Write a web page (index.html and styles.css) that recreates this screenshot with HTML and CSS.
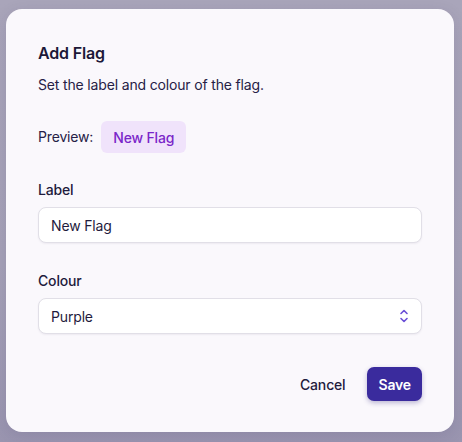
FILE: index.html
```html
<!DOCTYPE html>
<html lang="en">
<head>
<meta charset="utf-8">
<title>Add Flag</title>
<link rel="stylesheet" href="styles.css">
</head>
<body>
<div class="backdrop">
  <div class="dialog" role="dialog" aria-labelledby="dlg-title">
    <h2 class="title" id="dlg-title">Add Flag</h2>
    <p class="desc">Set the label and colour of the flag.</p>
    <div class="preview">
      <span class="preview-label">Preview:</span>
      <span class="badge">New Flag</span>
    </div>
    <div class="field">
      <label class="field-label" for="label">Label</label>
      <input class="input" id="label" type="text" value="New Flag">
    </div>
    <div class="field">
      <label class="field-label" for="colour">Colour</label>
      <div class="select">
        <span class="select-value">Purple</span>
        <svg class="chev" width="10" height="16" viewBox="0 0 10 16" aria-hidden="true">
          <path d="M2 5.5 L5 2.5 L8 5.5" fill="none" stroke="#6a4fd6" stroke-width="1.6" stroke-linecap="round" stroke-linejoin="round"/>
          <path d="M2 10.5 L5 13.5 L8 10.5" fill="none" stroke="#6a4fd6" stroke-width="1.6" stroke-linecap="round" stroke-linejoin="round"/>
        </svg>
      </div>
    </div>
    <div class="actions">
      <button class="btn btn-ghost" type="button">Cancel</button>
      <button class="btn btn-primary" type="button">Save</button>
    </div>
  </div>
</div>
</body>
</html>
```

FILE: styles.css
```css
* { box-sizing: border-box; }
html, body { margin: 0; padding: 0; }
body {
  width: 462px;
  height: 442px;
  overflow: hidden;
  font-family: Inter, "Liberation Sans", sans-serif;
  color: #1f1b3d;
  letter-spacing: -0.16px;
}
.backdrop {
  width: 462px;
  height: 442px;
  background: linear-gradient(180deg, #a9a5ba 0%, #a6a2b8 60%, #9a95b0 100%);
  padding: 9px 8px 10px 6px;
}
.dialog {
  width: 448px;
  height: 423px;
  background: #faf8fc;
  border-radius: 16px;
  padding: 32px 32px 0 32px;
  display: flex;
  flex-direction: column;
  box-shadow: 0 4px 16px rgba(40, 30, 80, 0.12);
}
.title {
  margin: 0;
  font-size: 16px;
  line-height: 24px;
  font-weight: 600;
  color: #1c1838;
}
.desc {
  margin: 10px 0 0 0;
  font-size: 14px;
  line-height: 20px;
  color: #262146;
}
.preview {
  margin-top: 26px;
  display: flex;
  align-items: center;
  gap: 8px;
  height: 32px;
}
.preview-label {
  font-size: 14px;
  line-height: 20px;
  color: #262146;
}
.badge {
  display: inline-flex;
  align-items: center;
  height: 32px;
  padding: 0 12px;
  border-radius: 6px;
  background: #f0e3fb;
  color: #7a26c9;
  font-size: 14px;
  font-weight: 500;
}
.field {
  margin-top: 27px;
  display: flex;
  flex-direction: column;
  gap: 7px;
}
.field + .field { margin-top: 28px; }
.field-label {
  font-size: 14px;
  line-height: 20px;
  font-weight: 500;
  color: #1f1b3d;
}
.input, .select {
  width: 384px;
  height: 36px;
  border: 1.5px solid #e1dfe7;
  border-radius: 8px;
  background: #ffffff;
  box-shadow: 0 1px 2px rgba(30, 20, 60, 0.06);
  padding: 0 12px;
  font-family: inherit;
  font-size: 14px;
  letter-spacing: inherit;
  color: #1f1b3d;
}
.input { outline: none; }
.select {
  display: flex;
  align-items: center;
  justify-content: space-between;
  padding-right: 12px;
}
.chev { display: block; }
.actions {
  margin-top: 33px;
  display: flex;
  justify-content: flex-end;
  gap: 10px;
}
.btn {
  height: 34px;
  border: none;
  border-radius: 7px;
  font-family: inherit;
  font-size: 14px;
  letter-spacing: inherit;
  padding: 0 12px;
  cursor: pointer;
}
.btn-ghost {
  background: transparent;
  color: #1f1b3d;
  font-weight: 500;
}
.btn-primary {
  background: #3a2b9d;
  color: #ffffff;
  font-weight: 600;
  padding: 0 11px;
  box-shadow: 0 2px 5px rgba(40, 30, 120, 0.3);
}
```
